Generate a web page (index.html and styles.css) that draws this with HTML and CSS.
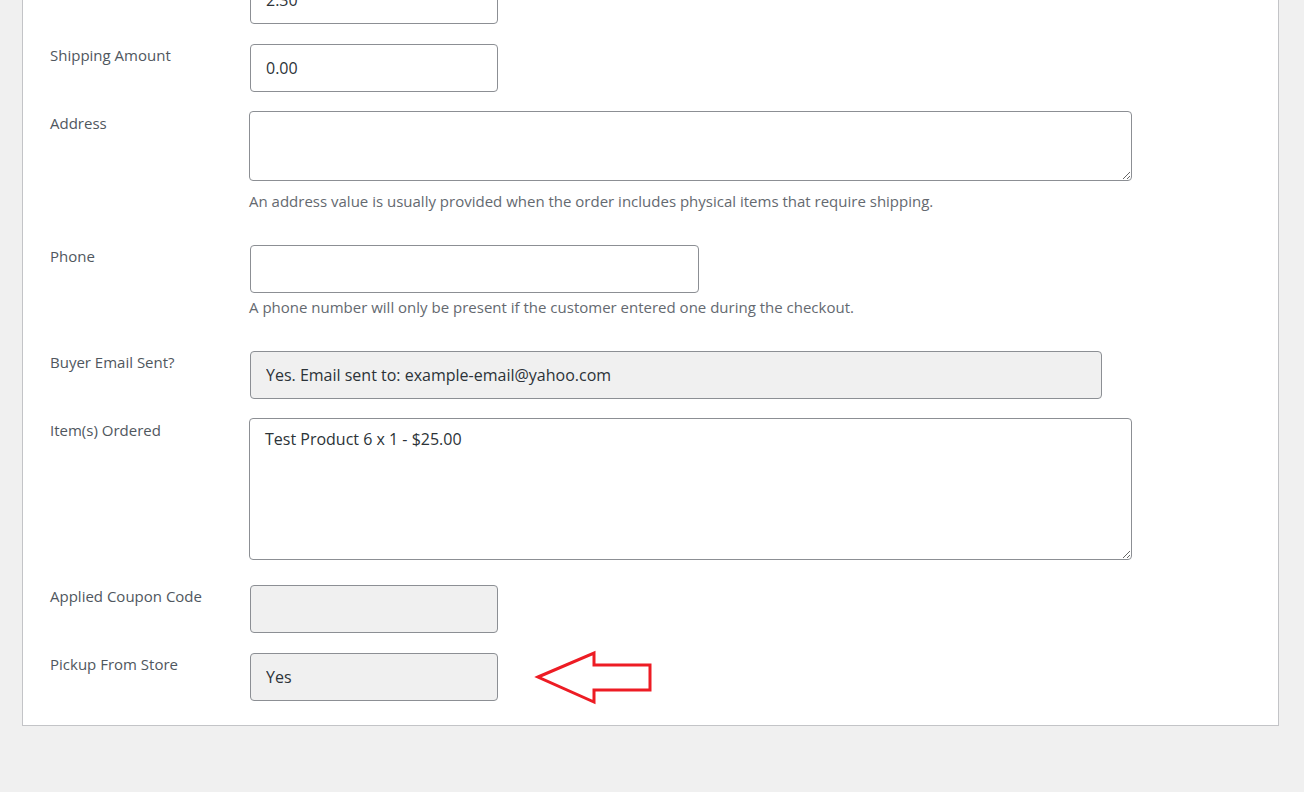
FILE: index.html
```html
<!DOCTYPE html>
<html lang="en">
<head>
  <meta charset="UTF-8" />
  <meta name="viewport" content="width=device-width, initial-scale=1.0" />
  <title>Edit Order</title>
  <link rel="stylesheet" href="styles.css">
</head>
<body>
  <div class="panel">
    <form class="order-form">
      <div class="row">
        <label class="row-label"></label>
        <div class="row-field"><input type="text" class="small-text" value="2.30" /></div>
      </div>

      <div class="row">
        <label class="row-label">Shipping Amount</label>
        <div class="row-field"><input type="text" class="small-text" value="0.00" /></div>
      </div>

      <div class="row">
        <label class="row-label">Address</label>
        <div class="row-field">
          <textarea class="address" rows="2"></textarea>
          <p class="description">An address value is usually provided when the order includes physical items that require shipping.</p>
        </div>
      </div>

      <div class="row">
        <label class="row-label">Phone</label>
        <div class="row-field">
          <input type="text" class="medium-text" value="" />
          <p class="description">A phone number will only be present if the customer entered one during the checkout.</p>
        </div>
      </div>

      <div class="row">
        <label class="row-label">Buyer Email Sent?</label>
        <div class="row-field"><input type="text" class="wide-text" value="Yes. Email sent to: example-email@yahoo.com" readonly /></div>
      </div>

      <div class="row">
        <label class="row-label">Item(s) Ordered</label>
        <div class="row-field"><textarea class="items" rows="5">Test Product 6 x 1 - $25.00</textarea></div>
      </div>

      <div class="row">
        <label class="row-label">Applied Coupon Code</label>
        <div class="row-field"><input type="text" class="small-text" value="" readonly /></div>
      </div>

      <div class="row">
        <label class="row-label">Pickup From Store</label>
        <div class="row-field pickup">
          <input type="text" class="small-text" value="Yes" readonly />
          <svg class="callout-arrow" width="122" height="58" viewBox="0 0 122 58">
            <path d="M4 27 L60 3 L60 15 L116 15 L116 40 L60 40 L60 52 Z" fill="none" stroke="#ed1c24" stroke-width="3" stroke-linejoin="miter" />
          </svg>
        </div>
      </div>
    </form>
  </div>
</body>
</html>
```

FILE: styles.css
```css
body {
  margin: 0;
  background: #f0f0f0;
  font-family: 'Open Sans', sans-serif;
  color: #3c434a;
  padding: 0 25px 0 22px;
}

/* page is scrolled: first row sits partly above the fold */
.panel {
  margin-top: -35px;
  background: #fff;
  border: 1px solid #c3c4c7;
  padding: 0 27px 14px;
}

.row {
  display: flex;
  padding: 10px 0;
}

.row-label {
  width: 199px;
  flex: none;
  padding-top: 1px;
  font-size: 15px;
  line-height: 20px;
  color: #50575e;
}

.row-field {
  flex: 1;
}

.row-field.pickup {
  position: relative;
}

input, textarea {
  box-sizing: border-box;
  font-family: 'Open Sans', sans-serif;
  font-size: 16px;
  color: #2c3338;
  border: 1px solid #8c8f94;
  border-radius: 4px;
  background: #fff;
  padding: 0 15px;
}

input {
  height: 48px;
  margin: 0 1px;
  display: block;
}

input[readonly] {
  background: #f0f0f0;
}

textarea {
  display: block;
  width: 883px;
  margin: -1px 0 5px;
  padding: 8px 15px;
  line-height: 24px;
  resize: vertical;
}

.small-text { width: 248px; }
.medium-text { width: 449px; }
.wide-text { width: 852px; }

.address { height: 70px; margin-bottom: 10px; }
.items { height: 142px; }

.description {
  margin: 4px 0 14px;
  font-size: 15px;
  line-height: 20px;
  color: #646970;
}

.callout-arrow {
  position: absolute;
  left: 285px;
  top: -3px;
}
```
